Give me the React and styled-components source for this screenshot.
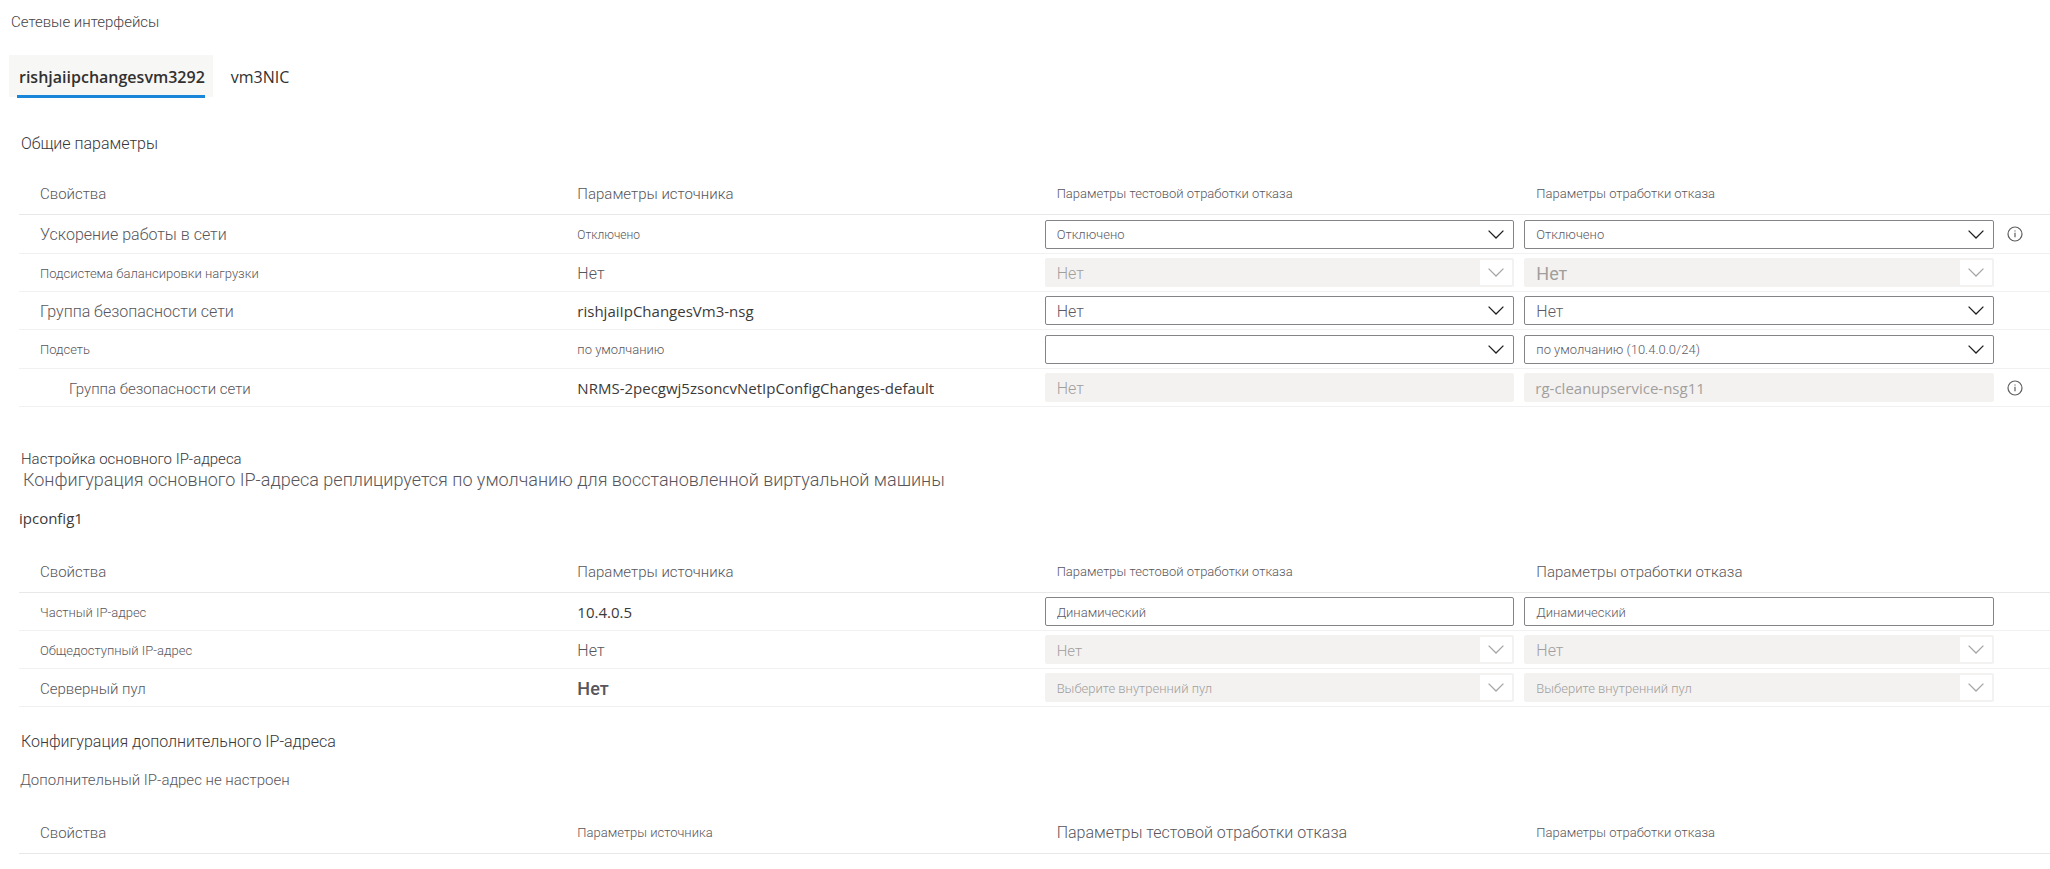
import React, { useId, useState } from 'react';
import styled, { createGlobalStyle } from 'styled-components';

const GlobalStyle = createGlobalStyle`
  *, *::before, *::after { box-sizing: border-box; }
  body {
    margin: 0;
    background: #fff;
    color: #58565b;
    font-family: Roboto, "Liberation Sans", sans-serif;
    font-weight: 300;
    font-size: 15px;
    line-height: 20px;
  }
`;

const latin = '"Open Sans", "Noto Sans", sans-serif';
const sizes = { xs: 12, sm: 13, md: 15, lg: 16, xl: 18 };
const fontSize = (p) => `font-size: ${sizes[p.$size || 'md']}px;`;

const Page = styled.main`
  padding: 12px 0 16px 9px;
`;

const Title = styled.h1`
  margin: 0 0 23px 2px;
  font-size: 15px;
  font-weight: 300;
  color: #454347;
`;

const TabList = styled.div`
  display: flex;
  gap: 8px;
  margin-bottom: 37px;
`;

const Tab = styled.button`
  position: relative;
  padding: 12px 8px 10px 10px;
  border: 0;
  background: ${(p) => (p.$active ? '#f7f7f6' : 'transparent')};
  color: #323130;
  font-family: ${latin};
  font-size: 16px;
  font-weight: ${(p) => (p.$active ? 600 : 400)};
  line-height: 20px;
  cursor: pointer;

  &::after {
    content: '';
    display: ${(p) => (p.$active ? 'block' : 'none')};
    position: absolute;
    left: 8px;
    right: 8px;
    bottom: -1px;
    height: 3px;
    background: #1a86d9;
  }
`;

const Section = styled.section`
  margin: 0 0 ${(p) => (p.$gap || 0)}px 10px;
`;

const Heading = styled.h2`
  margin: 0 2px;
  ${fontSize}
  font-weight: 300;
  color: #38363a;
`;

const Description = styled.p`
  margin: 0 4px 17px;
  font-size: 18px;
  line-height: 22px;
`;

const ConfigName = styled.h3`
  margin: 0 0 4px;
  font-family: ${latin};
  font-size: 15px;
  font-weight: 400;
  color: #3b3a39;
`;

const Note = styled.p`
  margin: 18px 0 3px 1px;
`;

const Table = styled.table`
  width: 100%;
  table-layout: fixed;
  border-collapse: separate;
  border-spacing: 0;
`;

const PropertyCol = styled.col`
  width: 27%;
`;

const SourceCol = styled.col`
  width: 23.5%;
`;

const InfoCol = styled.col`
  width: 46px;
`;

const HeaderCell = styled.th`
  height: 61px;
  padding: 0 0 10px ${(p) => p.$indent || 0}px;
  border-bottom: 1px solid #e8e8e8;
  text-align: left;
  vertical-align: bottom;
  font-weight: 300;
  ${fontSize}
`;

const Row = styled.tr`
  height: ${(p) => (p.$tall ? 39 : 38)}px;
`;

const PropertyCell = styled.th`
  padding: 2px 0 0 ${(p) => (p.$nested ? 50 : 21)}px;
  border-bottom: 1px solid #f1f1f1;
  text-align: left;
  font-weight: 300;
  ${fontSize}
`;

const Cell = styled.td`
  padding: 0 10px 0 0;
  border-bottom: 1px solid #f1f1f1;
`;

const SourceCell = styled(Cell)`
  padding-top: ${(p) => (p.$latin ? 0 : 2)}px;
  padding-left: 10px;
  ${fontSize}
  font-weight: ${(p) => (p.$strong ? 500 : p.$latin ? 400 : 300)};
  font-family: ${(p) => (p.$latin ? latin : 'inherit')};
  color: ${(p) => (p.$latin ? '#3b3a39' : 'inherit')};
`;

const InfoCell = styled(Cell)`
  padding: 0 0 0 3px;
`;

const controlLook = (p) => `
  display: block;
  width: 100%;
  height: 29px;
  margin: 0;
  padding: ${p.$latin ? 0 : 2}px 40px 0 ${p.$latin ? 10 : 11}px;
  border: 1px solid ${p.disabled ? '#f3f2f1' : '#858387'};
  border-radius: 2px;
  background: ${p.disabled ? '#f3f2f1' : '#fff'};
  color: ${p.disabled ? '#a19f9d' : '#5c5a66'};
  opacity: 1;
  font-family: ${p.$latin ? latin : 'inherit'};
  font-size: ${sizes[p.$size || 'md']}px;
  font-weight: ${p.$strong || p.$latin ? 400 : 300};
  line-height: 20px;
`;

const SelectWrap = styled.div`
  position: relative;
`;

const Select = styled.select`
  appearance: none;
  ${controlLook}
`;

const Input = styled.input`
  ${controlLook}
`;

const Arrow = styled.span`
  position: absolute;
  top: 2px;
  right: 2px;
  display: grid;
  place-items: center;
  width: 32px;
  height: 25px;
  background: #fff;
  color: ${(p) => (p.$disabled ? '#a8a6a4' : '#201f1e')};
  pointer-events: none;
`;

const InfoButton = styled.button`
  display: block;
  padding: 0;
  border: 0;
  background: none;
  color: #605e5c;
  line-height: 0;
  cursor: pointer;
`;

function Chevron() {
  return (
    <svg width="16" height="9" viewBox="0 0 16 9" fill="none" stroke="currentColor" strokeWidth="1.3" aria-hidden="true">
      <path d="M0.6 0.6 8 8 15.4 0.6" />
    </svg>
  );
}

function InfoIcon() {
  return (
    <svg width="16" height="16" viewBox="0 0 16 16" fill="none" stroke="currentColor" aria-hidden="true">
      <circle cx="8" cy="8" r="7" strokeWidth="1.2" />
      <path d="M8 6.8v4.4M8 4.4v1.2" strokeWidth="1.2" />
    </svg>
  );
}

function Control({ kind = 'select', value, disabled, size, strong, latin: isLatin, labelledBy }) {
  const look = { disabled, $size: size, $strong: strong, $latin: isLatin, 'aria-labelledby': labelledBy };
  if (kind === 'input') return <Input type="text" defaultValue={value} {...look} />;
  return (
    <SelectWrap>
      <Select {...look}>
        <option>{value}</option>
      </Select>
      <Arrow $disabled={disabled}>
        <Chevron />
      </Arrow>
    </SelectWrap>
  );
}

function SettingsTable({ headerSizes, rows = [], label }) {
  const id = useId();
  return (
    <Table aria-label={label}>
      <colgroup>
        <PropertyCol />
        <SourceCol />
        <col />
        <col />
        <InfoCol />
      </colgroup>
      <thead>
        <tr>
          <HeaderCell $indent={21}>Свойства</HeaderCell>
          <HeaderCell $indent={10} $size={headerSizes[0]}>Параметры источника</HeaderCell>
          <HeaderCell $indent={12} $size={headerSizes[1]} id={`${id}-test`}>Параметры тестовой отработки отказа</HeaderCell>
          <HeaderCell $indent={12} $size={headerSizes[2]} id={`${id}-failover`}>Параметры отработки отказа</HeaderCell>
          <HeaderCell as="td" />
        </tr>
      </thead>
      <tbody>
        {rows.map((row, i) => (
          <Row key={i} $tall={row.tall}>
            <PropertyCell scope="row" id={`${id}-${i}`} $size={row.size} $nested={row.nested}>
              {row.name}
            </PropertyCell>
            <SourceCell $size={row.source.size} $latin={row.source.latin} $strong={row.source.strong}>
              {row.source.value}
            </SourceCell>
            <Cell>
              <Control {...row.test} labelledBy={`${id}-${i} ${id}-test`} />
            </Cell>
            <Cell>
              <Control {...row.failover} labelledBy={`${id}-${i} ${id}-failover`} />
            </Cell>
            <InfoCell>
              {row.info && (
                <InfoButton type="button" aria-label="Сведения">
                  <InfoIcon />
                </InfoButton>
              )}
            </InfoCell>
          </Row>
        ))}
      </tbody>
    </Table>
  );
}

const generalRows = [
  {
    name: 'Ускорение работы в сети', size: 'lg', info: true, tall: true,
    source: { value: 'Отключено', size: 'xs' },
    test: { value: 'Отключено', size: 'sm' },
    failover: { value: 'Отключено', size: 'sm' },
  },
  {
    name: 'Подсистема балансировки нагрузки', size: 'sm',
    source: { value: 'Нет', size: 'lg' },
    test: { value: 'Нет', size: 'lg', disabled: true },
    failover: { value: 'Нет', size: 'xl', strong: true, disabled: true },
  },
  {
    name: 'Группа безопасности сети', size: 'lg',
    source: { value: 'rishjaiIpChangesVm3-nsg', latin: true },
    test: { value: 'Нет', size: 'lg' },
    failover: { value: 'Нет', size: 'lg' },
  },
  {
    name: 'Подсеть', size: 'sm', tall: true,
    source: { value: 'по умолчанию', size: 'sm' },
    test: { value: '' },
    failover: { value: 'по умолчанию (10.4.0.0/24)', size: 'sm' },
  },
  {
    name: 'Группа безопасности сети', nested: true, info: true,
    source: { value: 'NRMS-2pecgwj5zsoncvNetIpConfigChanges-default', latin: true },
    test: { kind: 'input', value: 'Нет', size: 'lg', disabled: true },
    failover: { kind: 'input', value: 'rg-cleanupservice-nsg11', latin: true, disabled: true },
  },
];

const ipRows = [
  {
    name: 'Частный IP-адрес', size: 'sm',
    source: { value: '10.4.0.5', latin: true },
    test: { kind: 'input', value: 'Динамический', size: 'sm' },
    failover: { kind: 'input', value: 'Динамический', size: 'sm' },
  },
  {
    name: 'Общедоступный IP-адрес', size: 'sm',
    source: { value: 'Нет', size: 'lg' },
    test: { value: 'Нет', disabled: true },
    failover: { value: 'Нет', size: 'lg', disabled: true },
  },
  {
    name: 'Серверный пул',
    source: { value: 'Нет', size: 'xl', strong: true },
    test: { value: 'Выберите внутренний пул', size: 'sm', disabled: true },
    failover: { value: 'Выберите внутренний пул', size: 'sm', disabled: true },
  },
];

const tabs = ['rishjaiipchangesvm3292', 'vm3NIC'];

export default function App() {
  const [active, setActive] = useState(tabs[0]);
  return (
    <>
      <GlobalStyle />
      <Page>
        <Title>Сетевые интерфейсы</Title>
        <TabList role="tablist">
          {tabs.map((name) => (
            <Tab key={name} type="button" role="tab" aria-selected={active === name} $active={active === name} onClick={() => setActive(name)}>
              {name}
            </Tab>
          ))}
        </TabList>
        <Section $gap={42}>
          <Heading $size="lg">Общие параметры</Heading>
          <SettingsTable label="Общие параметры" headerSizes={['md', 'sm', 'sm']} rows={generalRows} />
        </Section>
        <Section $gap={25}>
          <Heading>Настройка основного IP-адреса</Heading>
          <Description>Конфигурация основного IP-адреса реплицируется по умолчанию для восстановленной виртуальной машины</Description>
          <ConfigName>ipconfig1</ConfigName>
          <SettingsTable label="ipconfig1" headerSizes={['md', 'sm', 'md']} rows={ipRows} />
        </Section>
        <Section>
          <Heading $size="lg">Конфигурация дополнительного IP-адреса</Heading>
          <Note>Дополнительный IP-адрес не настроен</Note>
          <SettingsTable label="Дополнительный IP-адрес" headerSizes={['sm', 'lg', 'sm']} />
        </Section>
      </Page>
    </>
  );
}
